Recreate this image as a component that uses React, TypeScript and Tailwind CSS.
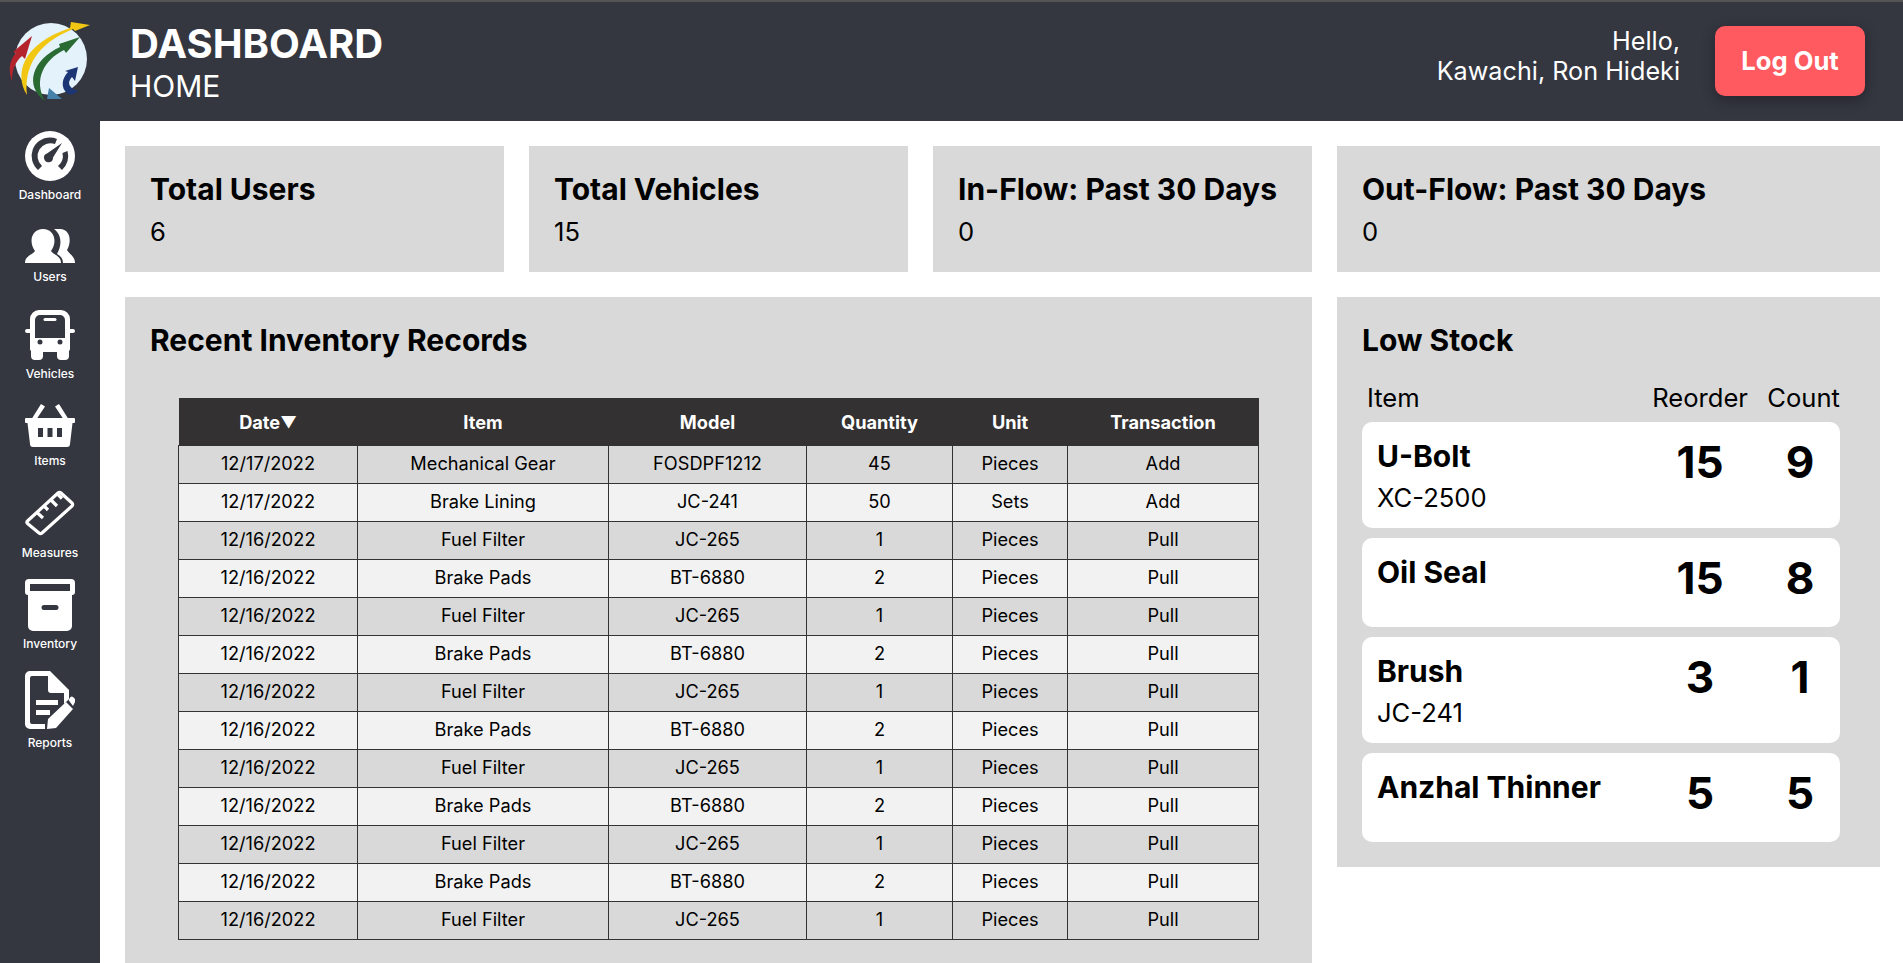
import React from "react";

const base: string[][] = [
  ["12/17/2022", "Mechanical Gear", "FOSDPF1212", "45", "Pieces", "Add"],
  ["12/17/2022", "Brake Lining", "JC-241", "50", "Sets", "Add"],
];
const rows: string[][] = [...base];
for (let i = 0; i < 11; i++) {
  rows.push(
    i % 2 === 0
      ? ["12/16/2022", "Fuel Filter", "JC-265", "1", "Pieces", "Pull"]
      : ["12/16/2022", "Brake Pads", "BT-6880", "2", "Pieces", "Pull"]
  );
}

const stock = [
  { name: "U-Bolt", model: "XC-2500", re: "15", ct: "9", h: "h-[106px]" },
  { name: "Oil Seal", model: "", re: "15", ct: "8", h: "h-[89px]" },
  { name: "Brush", model: "JC-241", re: "3", ct: "1", h: "h-[106px]" },
  { name: "Anzhal Thinner", model: "", re: "5", ct: "5", h: "h-[89px]" },
];

const Logo = () => (
  <svg width="100" height="120" viewBox="0 0 100 120">
    <circle cx="51" cy="59" r="36" fill="#e3f2fb" />
    <path d="M12 81 C7 68 11 58 16 53 L13 52 L32 36 L25 59 L22 56 C15 62 12 70 12 81Z" fill="#b5232c" />
    <path d="M27 95 C14 74 22 44 70 28 L71 22 L90 25 L75 31 L73 29 C36 44 24 68 27 95Z" fill="#f2c714" />
    <path d="M45 101 C24 86 32 60 60 47 L59 44 L80 37 L66 53 L64 50 C44 60 33 80 45 101Z" fill="#2a6a33" />
    <path d="M47 99 L49 88 L62 99 Z" fill="#4581a8" />
    <path d="M68 94 C60 88 62 78 68 72 L65 71 L78 67 L75 81 L72 77 C67 82 68 88 78 91 C75 94 71 95 68 94Z" fill="#1c3575" />
  </svg>
);

const IconGauge = () => (
  <svg width="50" height="50" viewBox="0 0 50 50">
    <circle cx="25" cy="25" r="25" fill="#fff" />
    <path d="M13 39 A18.5 18.5 0 0 1 25 6.5 A18.5 18.5 0 0 1 32 7.9 L30 13 A13 13 0 0 0 17 35 Z" fill="#343640" />
    <path d="M37 39 L33 35 A13 13 0 0 0 37.5 22 L42.5 20 A18.5 18.5 0 0 1 37 39Z" fill="#343640" />
    <path d="M37 12 L28 26.5 A4.5 4.5 0 1 1 22 22.5Z" fill="#343640" />
  </svg>
);

const IconUsers = () => (
  <svg width="50" height="34" viewBox="0 0 50 34">
    <path d="M29 0 H36 C45 1 47 12 42 21 C44 25 50 27 50 34 H38 C38 30 36 27 32 25 C37 16 37 6 29 0Z" fill="#fff" />
    <path d="M0 34 C0 27 7 26 10 22 C3 12 7 0 18 0 C29 0 33 12 26 22 C29 26 36 27 36 34Z" fill="#fff" />
  </svg>
);

const IconBus = () => (
  <svg width="50" height="50" viewBox="0 0 50 50">
    <path fillRule="evenodd" clipRule="evenodd" fill="#fff" d="M14 0 H36 A9 9 0 0 1 45 9 V19 H48 A2 2 0 0 1 48 23 H45 V38 A3 3 0 0 1 44 41 V46 A4 4 0 0 1 40 50 H36 A4 4 0 0 1 32 46 V42 H18 V46 A4 4 0 0 1 14 50 H10 A4 4 0 0 1 6 46 V41 A3 3 0 0 1 5 38 V23 H2 A2 2 0 0 1 2 19 H5 V9 A9 9 0 0 1 14 0Z M15 5 A5 5 0 0 0 10 10 V28 H40 V10 A5 5 0 0 0 35 5Z M15 29.5 A2.5 2.5 0 1 0 15 34.5 A2.5 2.5 0 1 0 15 29.5Z M35 29.5 A2.5 2.5 0 1 0 35 34.5 A2.5 2.5 0 1 0 35 29.5Z" />
    <path d="M20 8 H30 A1.5 1.5 0 0 1 30 11 H20 A1.5 1.5 0 0 1 20 8Z" fill="#fff" />
  </svg>
);

const IconBasket = () => (
  <svg width="50" height="43" viewBox="0 0 50 43">
    <path fill="#fff" d="M16 0 L20 2.5 L11 16 H6Z M34 0 L30 2.5 L39 16 H44Z" />
    <path fill="#fff" fillRule="evenodd" d="M1 14 H49 A1 1 0 0 1 50 15 V18 A1 1 0 0 1 49 19 H47.5 L45 40 A3 3 0 0 1 42 43 H8 A3 3 0 0 1 5 40 L2.5 19 H1 A1 1 0 0 1 0 18 V15 A1 1 0 0 1 1 14Z M13 24 V33 H18 V24Z M22.5 24 V33 H27.5 V24Z M32 24 V33 H37 V24Z" />
  </svg>
);

const IconRuler = () => (
  <svg width="50" height="46" viewBox="0 0 50 46" fill="none" stroke="#fff" strokeWidth="3.2">
    <path d="M2.5 31 L33 3 A2 2 0 0 1 36 3 L47 13 A2 2 0 0 1 47 16 L17 43 A2 2 0 0 1 14 43 L2.5 33.5 A1.5 1.5 0 0 1 2.5 31Z" strokeLinejoin="round" />
    <path d="M12 22.5 L18 28 M19 16 L23 20 M26 10 L32 16 M33 4.5 L37 8.5" />
  </svg>
);

const IconBox = () => (
  <svg width="50" height="52" viewBox="0 0 50 52">
    <path fillRule="evenodd" fill="#fff" d="M4 0 H46 A4 4 0 0 1 50 4 V13 A3 3 0 0 1 47 16 V47 A5 5 0 0 1 42 52 H8 A5 5 0 0 1 3 47 V16 A3 3 0 0 1 0 13 V4 A4 4 0 0 1 4 0Z M5 5 V12 H45 V5Z M19 26 A2 2 0 0 0 19 31 H31 A2 2 0 0 0 31 26Z" />
  </svg>
);

const IconReport = () => (
  <svg width="50" height="58" viewBox="0 0 50 58">
    <path fillRule="evenodd" fill="#fff" d="M5 0 H25 L44 19 V28 L39 33 V22 H26 A3 3 0 0 1 23 19 V5 H7 A2 2 0 0 0 5 7 V51 A2 2 0 0 0 7 53 H20 V58 H5 A5 5 0 0 1 0 53 V5 A5 5 0 0 1 5 0Z" />
    <path fill="#fff" d="M11 29 H33 V34 H11Z M11 39 H25 V44 H11Z M22 58 L23 48 L41 31 L48 38 L31 57Z" />
    <path fill="#fff" d="M43.5 29 L45.5 26 A2 2 0 0 1 48 26 L50 28 A2 2 0 0 1 50 31 L48 35Z" />
  </svg>
);

const nav = [
  { label: "Dashboard", icon: <IconGauge />, cls: "mt-[10px]", lab: "mt-[6px]" },
  { label: "Users", icon: <IconUsers />, cls: "mt-[27px]", lab: "mt-[6px]" },
  { label: "Vehicles", icon: <IconBus />, cls: "mt-[26px]", lab: "mt-[6px]" },
  { label: "Items", icon: <IconBasket />, cls: "mt-[23px]", lab: "mt-[6px]" },
  { label: "Measures", icon: <IconRuler />, cls: "mt-[22px]", lab: "mt-[9px]" },
  { label: "Inventory", icon: <IconBox />, cls: "mt-[19px]", lab: "mt-[5px]" },
  { label: "Reports", icon: <IconReport />, cls: "mt-[20px]", lab: "mt-[6px]" },
];

const Stat = ({ title, value }: { title: string; value: string }) => (
  <div className="h-[126px] bg-[#d9d9d9] px-[25px] pt-[23px]">
    <div className="text-[30px] leading-[40px] font-bold text-black">{title}</div>
    <div className="mt-[7px] text-[25.6px] leading-[32px] text-black">{value}</div>
  </div>
);

export default function App() {
  return (
    <div className="flex h-screen flex-col overflow-hidden bg-white font-['Inter',sans-serif]">
      <header className="flex h-[121px] shrink-0 items-start border-t-2 border-[#555] bg-[#343640]">
        <div className="w-[100px] shrink-0 -mt-[2px]">
          <Logo />
        </div>
        <div className="mt-[18px] ml-[30px] text-white">
          <div className="text-[40px] leading-[48px] font-bold">DASHBOARD</div>
          <div className="-mt-[1px] text-[30px] leading-[38px]">HOME</div>
        </div>
        <div className="mt-[24px] ml-auto text-right text-[25.2px] leading-[30px] text-white">
          <div>Hello,</div>
          <div>Kawachi, Ron Hideki</div>
        </div>
        <button className="mt-[24px] mr-[38px] ml-[35px] h-[70px] w-[150px] rounded-[10px] bg-[#ff5a5f] text-[25.6px] font-bold text-white shadow-[0_4px_14px_rgba(0,0,0,0.3)]">
          Log Out
        </button>
      </header>
      <div className="flex min-h-0 flex-1">
        <aside className="flex w-[100px] shrink-0 flex-col items-center bg-[#343640]">
          {nav.map((n) => (
            <div key={n.label} className={"flex flex-col items-center " + n.cls}>
              {n.icon}
              <div className={"text-[12px] leading-[15px] font-medium text-white " + n.lab}>{n.label}</div>
            </div>
          ))}
        </aside>
        <main className="min-w-0 flex-1 pt-[25px] pl-[25px]">
          <div className="grid grid-cols-[379px_379px_379px_543px] gap-[25px]">
            <Stat title="Total Users" value="6" />
            <Stat title="Total Vehicles" value="15" />
            <Stat title="In-Flow: Past 30 Days" value="0" />
            <Stat title="Out-Flow: Past 30 Days" value="0" />
          </div>
          <div className="mt-[25px] flex items-start gap-[25px]">
            <section className="w-[1187px] shrink-0 bg-[#d9d9d9] px-[25px] pt-[23px] pb-[30px]">
              <h2 className="text-[30px] leading-[40px] font-bold text-black">Recent Inventory Records</h2>
              <table className="mt-[38px] ml-[28px] w-[1080px] table-fixed border-collapse text-[18.2px] text-black">
                <colgroup>
                  <col className="w-[179px]" />
                  <col className="w-[251px]" />
                  <col className="w-[198px]" />
                  <col className="w-[146px]" />
                  <col className="w-[115px]" />
                  <col className="w-[191px]" />
                </colgroup>
                <thead>
                  <tr className="h-[47px] bg-[#333131] text-white">
                    {["Date", "Item", "Model", "Quantity", "Unit", "Transaction"].map((h) => (
                      <th key={h} className="pt-[2px] text-center align-middle font-bold">
                        {h}
                        {h === "Date" && <span className="relative -top-[1px] text-[16px]">▼</span>}
                      </th>
                    ))}
                  </tr>
                </thead>
                <tbody>
                  {rows.map((r, i) => (
                    <tr key={i} className={"h-[38px] " + (i % 2 === 0 ? "bg-[#d9d9d9]" : "bg-[#f2f2f2]")}>
                      {r.map((c, j) => (
                        <td key={j} className="border border-[#333] p-0 text-center align-middle">
                          {c}
                        </td>
                      ))}
                    </tr>
                  ))}
                </tbody>
              </table>
            </section>
            <section className="w-[543px] shrink-0 bg-[#d9d9d9] px-[25px] pt-[23px] pb-[25px]">
              <h2 className="text-[30px] leading-[40px] font-bold text-black">Low Stock</h2>
              <div className="mt-[22px] flex w-[478px] text-[25.6px] leading-[32px] text-black">
                <div className="flex-1 pl-[5px]">Item</div>
                <div className="w-[100px] text-right">Reorder</div>
                <div className="w-[92px] text-right">Count</div>
              </div>
              <div className="mt-[8px] flex w-[478px] flex-col gap-[10px]">
                {stock.map((s) => (
                  <div key={s.name} className={"flex rounded-[10px] bg-white " + s.h}>
                    <div className="flex-1 pt-[16px] pl-[15px] text-black">
                      <div className="text-[30px] leading-[36px] font-bold">{s.name}</div>
                      {s.model && <div className="mt-[8px] text-[25.6px] leading-[32px]">{s.model}</div>}
                    </div>
                    <div className="mr-[20px] w-[80px] pt-[14px] text-center text-[44px] leading-[52px] font-bold text-black">{s.re}</div>
                    <div className="w-[80px] pt-[14px] text-center text-[44px] leading-[52px] font-bold text-black">{s.ct}</div>
                  </div>
                ))}
              </div>
            </section>
          </div>
        </main>
      </div>
    </div>
  );
}
